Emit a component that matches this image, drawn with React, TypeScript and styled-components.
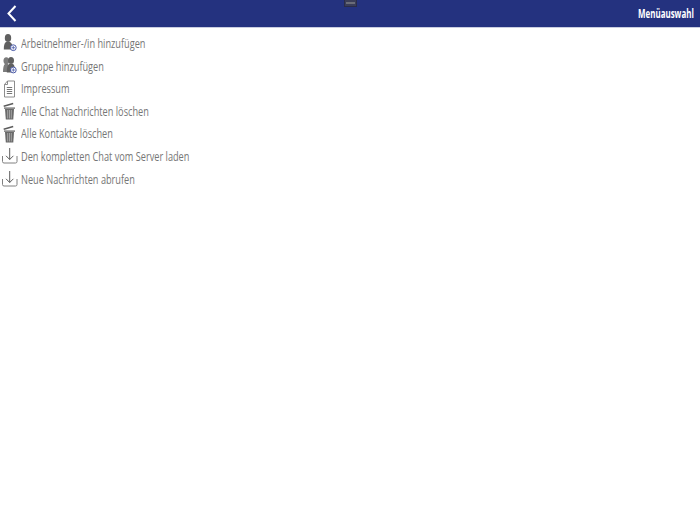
import React from "react";
import styled, { createGlobalStyle } from "styled-components";

const GlobalStyle = createGlobalStyle`
  html, body {
    margin: 0;
    padding: 0;
    background: #fff;
    font-family: "Open Sans", "Liberation Sans", sans-serif;
  }
`;

const Page = styled.div`
  width: 700px;
  height: 525px;
  overflow: hidden;
  background: #fff;
`;

const Toolbar = styled.header`
  position: relative;
  height: 27px;
  display: flex;
  align-items: center;
  justify-content: space-between;
  padding: 0 6px;
  background: #24327f;
  border-bottom: 1px solid #c9cde0;
`;

const BackButton = styled.button`
  border: 0;
  padding: 0;
  background: none;
  display: flex;
`;

// the original font is a narrow one, so the glyphs get squeezed from the right edge
const Title = styled.span`
  color: #fff;
  font-size: 11.5px;
  font-weight: 700;
  white-space: nowrap;
  transform: scaleX(0.69);
  transform-origin: right center;
`;

// small handle at the top of the window, lies over the toolbar
const Handle = styled.div`
  position: absolute;
  top: 0;
  left: 344px;
  width: 13px;
  height: 7px;
  box-sizing: border-box;
  background: #3a3d58;
  border: 1px solid #2a2c48;
  border-top: 0;
  &::after {
    content: "";
    display: block;
    margin: 2px 1px 0;
    height: 2px;
    background: #6a6c78;
  }
`;

const Menu = styled.ul`
  list-style: none;
  margin: 0;
  padding: 4.2px 0 0 2px;
`;

const Row = styled.li`
  height: 22.6px;
  display: flex;
  align-items: center;
  gap: 3px;
`;

const IconBox = styled.span`
  width: 16px;
  height: 18px;
  display: flex;
  flex: none;
`;

const Label = styled.span`
  display: inline-block;
  color: #767676;
  font-size: 12.5px;
  white-space: nowrap;
  transform: scaleX(0.735);
  transform-origin: left center;
`;

const PlusBadge = ({ cx, cy }: { cx: number; cy: number }) => (
  <>
    <circle cx={cx} cy={cy} r="2.9" fill="#fff" stroke="#4a5aa8" strokeWidth="1" />
    <path d={`M${cx - 1.8} ${cy}h3.6M${cx} ${cy - 1.8}v3.6`} stroke="#4a5aa8" strokeWidth="0.8" />
  </>
);

const UserIcon = () => (
  <svg width="16" height="18" viewBox="0 0 16 18">
    <ellipse cx="6" cy="4" rx="3.200" ry="4" fill="#606060" />
    <path d="M1.800 15.500c0-4 .5-6.500 2.200-7.500h4c1.500 1 3 3 3 7.500z" fill="#606060" />
    <PlusBadge cx={11.3} cy={13.7} />
  </svg>
);

const GroupIcon = () => (
  <svg width="16" height="18" viewBox="0 0 16 18">
    <ellipse cx="4.300" cy="3.800" rx="2.800" ry="3.500" fill="#7c7c7c" />
    <path d="M1 15c0-4 .5-7 2-8h3v8z" fill="#7c7c7c" />
    <ellipse cx="9" cy="3.500" rx="3" ry="3.500" fill="#606060" />
    <path d="M4.800 15.500c0-4 .5-7.500 2.200-8.500h4c1.500 1 2.200 4 2.200 8.500z" fill="#606060" />
    <PlusBadge cx={11.3} cy={13} />
  </svg>
);

const DocIcon = () => (
  <svg width="16" height="18" viewBox="0 0 16 18" fill="none" stroke="#808080" strokeWidth="0.9">
    <path d="M5.500 1H12.500V17H2.500V4.500z" />
    <path d="M5.500 1V4.500H2.500" />
    <path d="M4.800 7.500h5.400M4.800 9.500h5.400M4.800 11.500h5.400M4.800 13.500h5.400" stroke="#666" />
  </svg>
);

const TrashIcon = () => (
  <svg width="16" height="18" viewBox="0 0 16 18">
    <path d="M1.500 3.500 11 .8l.4 1.500-9.500 2.700z" fill="#5c5c5c" />
    <path d="M2 5.500h11v1.200H2z" fill="#5c5c5c" />
    <path d="M3 7h9l-.7 10.500H3.800z" fill="#6a6a6a" />
    <path d="M5.700 8v8.500M7.500 8v8.500M9.300 8v8.500" stroke="#ccc" strokeWidth="0.6" />
  </svg>
);

const DownloadIcon = () => (
  <svg width="16" height="18" viewBox="0 0 16 18" fill="none" stroke="#5e5e5e" strokeWidth="1">
    <path d="M7.700 1v11.500M4 8.800l3.700 3.700 3.700-3.700" />
    <path d="M.5 9v5.500a1.500 1.500 0 0 0 1.500 1.500h11.500a1.500 1.500 0 0 0 1.500-1.500V9" stroke="#808080" />
  </svg>
);

const items = [
  { label: "Arbeitnehmer-/in hinzufügen", icon: <UserIcon /> },
  { label: "Gruppe hinzufügen", icon: <GroupIcon /> },
  { label: "Impressum", icon: <DocIcon /> },
  { label: "Alle Chat Nachrichten löschen", icon: <TrashIcon /> },
  { label: "Alle Kontakte löschen", icon: <TrashIcon /> },
  { label: "Den kompletten Chat vom Server laden", icon: <DownloadIcon /> },
  { label: "Neue Nachrichten abrufen", icon: <DownloadIcon /> },
];

export default function App() {
  return (
    <Page>
      <GlobalStyle />
      <Toolbar>
        <BackButton>
          <svg width="12" height="18" viewBox="0 0 12 18" fill="none" stroke="#fff" strokeWidth="2">
            <path d="M9.500 1 2.500 8.500l7 7.500" />
          </svg>
        </BackButton>
        <Handle />
        <Title>Menüauswahl</Title>
      </Toolbar>
      <Menu>
        {items.map((item) => (
          <Row key={item.label}>
            <IconBox>{item.icon}</IconBox>
            <Label>{item.label}</Label>
          </Row>
        ))}
      </Menu>
    </Page>
  );
}
